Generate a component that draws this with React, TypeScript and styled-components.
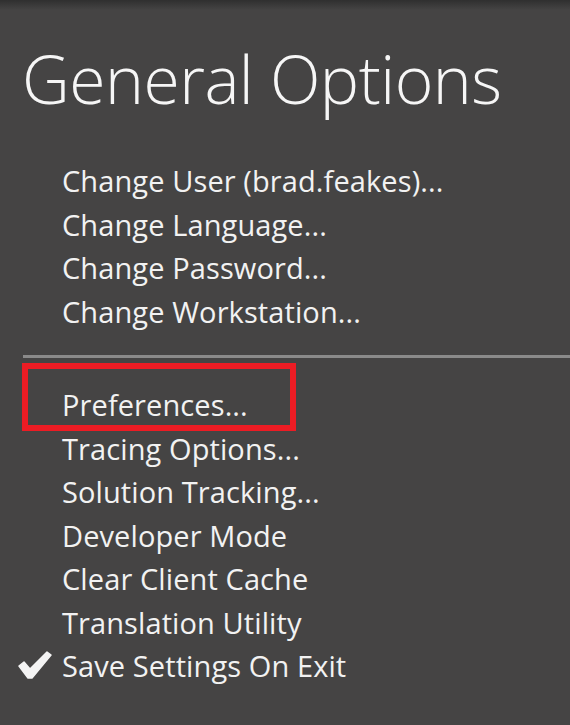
import React from "react";
import styled, { createGlobalStyle } from "styled-components";

const GlobalStyle = createGlobalStyle`
  html, body {
    margin: 0;
    padding: 0;
    background: #454444;
  }
`;

const Panel = styled.div`
  width: 570px;
  height: 725px;
  overflow: hidden;
  background: linear-gradient(to bottom, #2f2f2f 0px, #454444 10px, #454444 100%);
  font-family: "Open Sans", "Liberation Sans", sans-serif;
  color: #f2f2f2;
  display: flex;
  flex-direction: column;
`;

const Title = styled.h1`
  margin: 38px 0 0 22px;
  font-size: 66px;
  font-weight: 300;
  line-height: 80px;
  letter-spacing: -0.5px;
  color: #f6f6f6;
`;

const Group = styled.ul<{ $top?: number }>`
  list-style: none;
  margin: ${({ $top }) => $top ?? 0}px 0 0 0;
  padding: 0 0 0 18px;
  display: flex;
  flex-direction: column;
`;

const Separator = styled.div`
  height: 3px;
  margin: 22px 0 25px 23px;
  background: #8a8a8a;
`;

const Item = styled.li<{ $highlight?: boolean }>`
  position: relative;
  display: flex;
  align-items: center;
  height: 43.5px;
  font-size: 29px;
  letter-spacing: 0.1px;
  white-space: nowrap;

  ${({ $highlight }) =>
    $highlight &&
    `
    &::after {
      content: "";
      position: absolute;
      left: 4px;
      top: -20px;
      width: 262px;
      height: 56px;
      border: 6px solid #ec1c24;
    }
  `}
`;

const CheckCell = styled.span`
  width: 44px;
  display: flex;
  align-items: center;
`;

const Check = () => (
  <svg width="34" height="32" viewBox="0 0 34 32">
    <path
      d="M1 16 L6 12 L12 19 L29 2 L33 5 L14 28 L10 28 Z"
      fill="#f4f4f4"
      stroke="#f4f4f4"
      strokeWidth="1.5"
      strokeLinejoin="round"
    />
  </svg>
);

const topItems = [
  "Change User (brad.feakes)...",
  "Change Language...",
  "Change Password...",
  "Change Workstation...",
];

const bottomItems = [
  { label: "Preferences...", highlight: true },
  { label: "Tracing Options..." },
  { label: "Solution Tracking..." },
  { label: "Developer Mode" },
  { label: "Clear Client Cache" },
  { label: "Translation Utility" },
  { label: "Save Settings On Exit", checked: true },
];

const App = () => {
  return (
    <>
      <GlobalStyle />
      <Panel>
        <Title>General Options</Title>
        <Group $top={41}>
          {topItems.map((label) => (
            <Item key={label}>
              <CheckCell />
              {label}
            </Item>
          ))}
        </Group>
        <Separator />
        <Group>
          {bottomItems.map((item) => (
            <Item key={item.label} $highlight={item.highlight}>
              <CheckCell>{item.checked && <Check />}</CheckCell>
              {item.label}
            </Item>
          ))}
        </Group>
      </Panel>
    </>
  );
};

export default App;
